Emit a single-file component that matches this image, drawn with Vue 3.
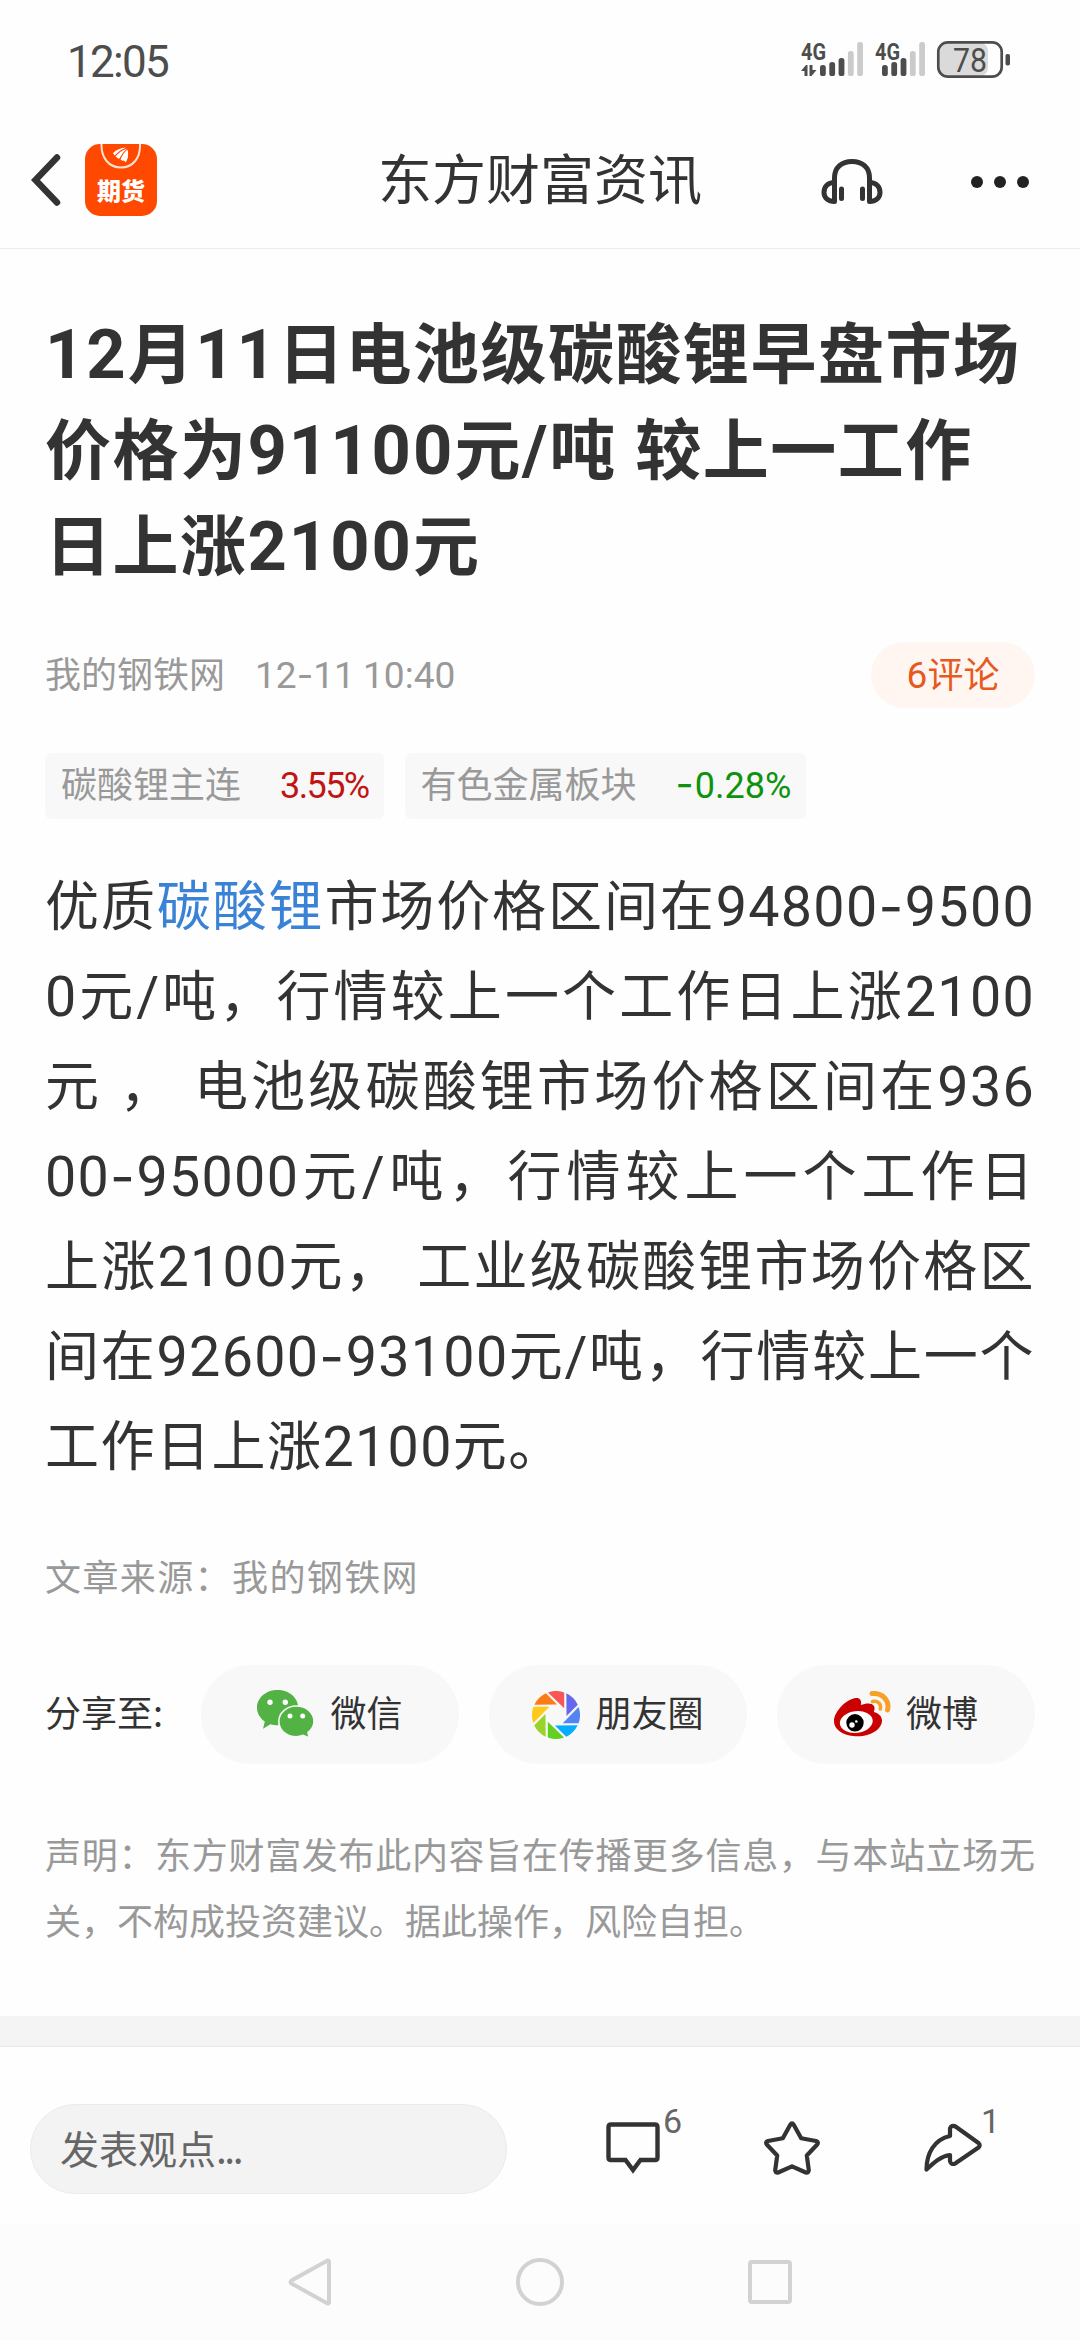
<script setup>
const titleLines = [
  "12月11日电池级碳酸锂早盘市场",
  "价格为91100元/吨 较上一工作",
  "日上涨2100元",
];

const tags = [
  { name: "碳酸锂主连", change: "3.55%", trend: "up" },
  { name: "有色金属板块", change: "-0.28%", trend: "down" },
];

const bodyLines = [
  "优质[碳酸锂]市场价格区间在94800-9500",
  "0元/吨，行情较上一个工作日上涨2100",
  "元 ， 电池级碳酸锂市场价格区间在936",
  "00-95000元/吨，行情较上一个工作日",
  "上涨2100元， 工业级碳酸锂市场价格区",
  "间在92600-93100元/吨，行情较上一个",
  "工作日上涨2100元。",
];

const bladeColors = [
  "#f95555",
  "#6568ee",
  "#5384f4",
  "#05adff",
  "#62d021",
  "#9ad329",
  "#ffc81b",
  "#fd7b17",
];

const signals = [
  { x: 0, bars: 22, data: true },
  { x: 74, bars: 10, data: false },
];

const barHeights = [11, 14, 18, 25, 34];

// split a line into numbers, hyphens, [links] and plain text
function runs(text) {
  return text
    .split(/(\[[^\]]+\]|[\d.:%/]+|-)/)
    .filter((part) => part !== "")
    .map((part) => {
      if (part.startsWith("[")) return { text: part.slice(1, -1), type: "link" };
      if (part === "-") return { text: part, type: "dash" };
      if (/^[\d.:%/]+$/.test(part)) return { text: part, type: "num" };
      return { text: part, type: "word" };
    });
}
</script>

<template>
  <div class="page">
    <div class="status-bar">
      <span class="clock">12:05</span>
      <svg class="status-icons" width="212" height="40" viewBox="0 0 212 40">
        <g v-for="s in signals" :key="s.x" :transform="`translate(${s.x} 0)`">
          <text x="0" y="19.5" class="net" textLength="25" lengthAdjust="spacingAndGlyphs">4G</text>
          <rect
            v-for="(h, i) in barHeights"
            :key="h"
            :x="s.bars - 3 + i * 9.3"
            :y="36 - h"
            width="5.8"
            :height="h"
            rx="2.6"
            :fill="i < 3 ? '#4d4d4d' : '#cbcbcb'"
          />
          <path
            v-if="s.data"
            d="M0 31 L5 25 H6.5 V36 H3.5 V31 Z M8.5 25 H11.5 V30 H15.5 L10.5 36 H8.5 Z"
            fill="#4d4d4d"
          />
        </g>
        <rect x="138.5" y="3" width="48.5" height="33" rx="8" fill="#dadada" />
        <rect x="137.3" y="2.3" width="63.4" height="34.4" rx="9.5" fill="none" stroke="#4d4d4d" stroke-width="2.7" />
        <rect x="204.5" y="14" width="4.5" height="11.5" rx="1.8" fill="#4d4d4d" />
        <text x="152" y="31.5" class="level" textLength="34" lengthAdjust="spacingAndGlyphs">78</text>
      </svg>
    </div>

    <header class="nav-bar">
      <div class="nav-left">
        <svg width="32" height="54" viewBox="0 0 32 54">
          <path d="M27 4.5 L5.5 27 L27 49.5" fill="none" stroke="#333" stroke-width="6.5" stroke-linecap="round" />
        </svg>
        <div class="app-icon">
          <svg width="72" height="30" viewBox="0 0 72 30">
            <path d="M16.5 0 C16 14 24 23.5 36 23.5 S55.5 14 55 0" fill="none" stroke="#ffe3d6" stroke-width="2" />
            <path d="M28 9 Q33 4 41 3.5 Q34 6.5 29.5 11.5 Z" fill="#fff" />
            <path d="M30.5 12.5 Q35 7 42 4.5 Q37 9 34 15 Z" fill="#fff" />
            <path d="M35.5 15.5 Q38 9 42.5 5.5 Q44.5 13 40.5 18.5 Q39 15.5 38 17 Z" fill="#fff" />
          </svg>
          <span>期货</span>
        </div>
      </div>
      <h2 class="nav-title">东方财富资讯</h2>
      <div class="nav-right">
        <svg width="62" height="48" viewBox="0 0 62 48" fill="none" stroke="#333">
          <path d="M13.5 43.5 V20 C13.5 9 21 3.5 31 3.5 S48.5 9 48.5 20 V43.5" stroke-width="5" />
          <path d="M13.5 24.5 C6.5 24.5 3 29 3 34.5 S7.5 43.5 13.5 43.5" stroke-width="5" stroke-linecap="round" />
          <path d="M48.5 24.5 C55.5 24.5 59 29 59 34.5 S54.5 43.5 48.5 43.5" stroke-width="5" stroke-linecap="round" />
          <path d="M20.5 31 V40.5 M41.5 31 V40.5" stroke-width="5" stroke-linecap="round" />
        </svg>
        <svg width="60" height="14" viewBox="0 0 60 14" fill="#222">
          <circle cx="7" cy="7" r="6" />
          <circle cx="30" cy="7" r="6" />
          <circle cx="53" cy="7" r="6" />
        </svg>
      </div>
    </header>

    <main class="article">
      <h1 class="title">
        <div v-for="line in titleLines" :key="line">
          <span v-for="(run, i) in runs(line)" :key="i" :class="run.type">{{ run.text }}</span>
        </div>
      </h1>

      <div class="meta">
        <span class="author">我的钢铁网</span>
        <span class="date">
          <span v-for="(run, i) in runs('12-11 10:40')" :key="i" :class="run.type">{{ run.text }}</span>
        </span>
        <span class="comments"><span class="num">6</span>评论</span>
      </div>

      <div class="tags">
        <div v-for="tag in tags" :key="tag.name" class="tag">
          <span>{{ tag.name }}</span>
          <span class="change" :class="tag.trend">
            <span v-for="(run, i) in runs(tag.change)" :key="i" :class="run.type">{{ run.text }}</span>
          </span>
        </div>
      </div>

      <div class="content">
        <p v-for="line in bodyLines" :key="line">
          <span v-for="(run, i) in runs(line)" :key="i" :class="run.type">{{ run.text }}</span>
        </p>
      </div>

      <p class="source">文章来源：我的钢铁网</p>

      <div class="share">
        <span class="share-label">分享至:</span>
        <button class="share-btn">
          <svg width="58" height="49" viewBox="0 0 58 49">
            <path
              d="M20.6 0 C32 0 41.2 7.8 41.2 17.5 S32 35.2 20.6 35.2 C18 35.2 16 35 13.5 34.2 L6 38.7 L7.8 31.5 C3 28 0 23.5 0 17.5 C0 7.8 9.2 0 20.6 0 Z"
              fill="#52b244"
            />
            <path
              d="M39.3 16 C49 16 57 22.5 57 31.5 C57 36 54.8 39.5 51 42.5 L52.3 48 L46.2 45.3 C44 46.2 41.8 46.8 39.3 46.8 C29.5 46.8 21.8 40 21.8 31.5 S29.5 16 39.3 16 Z"
              fill="#52b244"
              stroke="#f8f8f8"
              stroke-width="1.6"
            />
            <g fill="#fff">
              <circle cx="13" cy="12.3" r="2.7" />
              <circle cx="28.3" cy="12.3" r="2.7" />
              <circle cx="33" cy="26" r="2.5" />
              <circle cx="45.7" cy="26" r="2.5" />
            </g>
          </svg>
          <span>微信</span>
        </button>
        <button class="share-btn">
          <svg width="48" height="48" viewBox="-24 -24 48 48">
            <path
              v-for="(color, i) in bladeColors"
              :key="color"
              d="M-8 -22.6 A24 24 0 0 1 8.2 -22.6 V-6.7 Z"
              :fill="color"
              :transform="`rotate(${i * 45})`"
            />
          </svg>
          <span>朋友圈</span>
        </button>
        <button class="share-btn">
          <svg width="57" height="47" viewBox="0 0 57 47">
            <path
              d="M0 30 C0 21 12 8 22 7 C26 6.8 28 9.5 26.8 14 C32 12 38 11.5 40 15 C41 17 40.5 19 39.8 21 C44 22 48 25 48 29.5 C48 38 37 45.3 24 45.3 C11 45.3 0 39.5 0 30 Z"
              fill="#c90101"
            />
            <ellipse cx="22.3" cy="31" rx="16.5" ry="10.8" fill="#fff" transform="rotate(-7 22.3 31)" />
            <circle cx="21" cy="31.8" r="8.7" fill="#000" />
            <circle cx="18" cy="34" r="2.7" fill="#fff" />
            <circle cx="22.3" cy="30.5" r="1.3" fill="#fff" />
            <path d="M38 2.6 C48 1.5 56 9 53.5 19" fill="none" stroke="#f7a128" stroke-width="5" stroke-linecap="round" />
            <path d="M38.5 10.5 C44 9.5 47.5 13 46.3 18" fill="none" stroke="#f7a128" stroke-width="3.6" stroke-linecap="round" />
          </svg>
          <span>微博</span>
        </button>
      </div>

      <div class="notice">
        <p>声明：东方财富发布此内容旨在传播更多信息，与本站立场无</p>
        <p>关，不构成投资建议。据此操作，风险自担。</p>
      </div>
    </main>

    <div class="divider"></div>

    <footer class="toolbar">
      <div class="input">发表观点<span class="dots">...</span></div>
      <div class="actions">
        <div class="action">
          <svg width="56" height="56" viewBox="0 0 56 56">
            <path
              d="M6 3.5 H50 Q52.5 3.5 52.5 6 V36.5 Q52.5 39 50 39 H35.5 L28 49 L20.5 39 H6 Q3.5 39 3.5 36.5 V6 Q3.5 3.5 6 3.5 Z"
              fill="none"
              stroke="#333"
              stroke-width="4.4"
            />
          </svg>
          <span class="count">6</span>
        </div>
        <div class="action">
          <svg width="56" height="56" viewBox="0 0 56 56">
            <path
              d="M26.3 3.8 Q28 1 29.7 3.8 L37.2 17.3 L52 20 Q55 21 53.2 23.5 L42.8 34.5 L44.8 49.3 Q44.7 52.3 41.8 51.5 L28 45.3 L14.2 51.5 Q11.3 52.3 11.2 49.3 L13.2 34.5 L2.8 23.5 Q1 21 4 20 L18.8 17.3 Z"
              fill="none"
              stroke="#333"
              stroke-width="4.2"
              stroke-linejoin="round"
            />
          </svg>
        </div>
        <div class="action">
          <svg width="60" height="56" viewBox="0 0 60 56">
            <path
              d="M27 7.5 Q28.5 3.5 32.5 5.5 L55.5 22 Q57.8 24 55.5 26.5 L32.5 42.3 Q28 44.5 27 40 V34 C18 35 11 41.5 3.5 48.5 C3.5 32 11.5 18.5 27 15 Z"
              fill="none"
              stroke="#333"
              stroke-width="4.2"
              stroke-linejoin="round"
            />
          </svg>
          <span class="count">1</span>
        </div>
      </div>
    </footer>

    <nav class="system-nav">
      <svg width="48" height="52" viewBox="0 0 48 52">
        <path d="M41.5 4.5 Q43 4 43 6 V46 Q43 48 41.5 47.5 L5.5 27.5 Q3.5 26 5.5 24.5 Z" fill="none" stroke="#d2d2d2" stroke-width="4" />
      </svg>
      <svg width="48" height="52" viewBox="0 0 48 52">
        <circle cx="24" cy="26" r="22" fill="none" stroke="#d2d2d2" stroke-width="4" />
      </svg>
      <svg width="48" height="52" viewBox="0 0 48 52">
        <rect x="4" y="6" width="40" height="40" rx="2" fill="none" stroke="#d2d2d2" stroke-width="4" />
      </svg>
    </nav>
  </div>
</template>

<style>
body {
  margin: 0;
  background: #fff;
}
</style>

<style scoped>
.page {
  width: 1080px;
  height: 2340px;
  display: flex;
  flex-direction: column;
  overflow: hidden;
  background: #fefefe;
  color: #333;
  font-family: "Noto Sans CJK SC", sans-serif;
  font-size: 36px;
}
p,
h1,
h2 {
  margin: 0;
}
svg {
  flex: none;
  display: block;
}
.num {
  font-family: Roboto, sans-serif;
  font-size: 1.03em;
  line-height: 1;
}
.dash {
  font-family: Inter, sans-serif;
  line-height: 1;
}
.word {
  white-space: pre;
}
.status-bar {
  height: 112px;
  box-sizing: border-box;
  padding: 40px 67px 0 67px;
  display: flex;
  justify-content: space-between;
  align-items: flex-start;
}
.clock {
  font-family: Roboto, sans-serif;
  font-size: 44px;
  line-height: 44px;
  letter-spacing: -1.7px;
  color: #4d4d4d;
}
.net {
  font-family: Roboto, sans-serif;
  font-size: 23px;
  font-weight: 700;
  fill: #4d4d4d;
}
.level {
  font-family: Roboto, sans-serif;
  font-size: 33px;
  fill: #4d4d4d;
}
.nav-bar {
  height: 136px;
  border-bottom: 1px solid #ebebeb;
  padding: 0 50px 0 30px;
  display: grid;
  grid-template-columns: 348px 1fr 230px;
  align-items: center;
}
.nav-left {
  display: flex;
  align-items: center;
  gap: 23px;
}
.app-icon {
  width: 72px;
  height: 72px;
  border-radius: 15px;
  background: #ff4800;
  color: #fff;
  text-align: center;
  overflow: hidden;
}
.app-icon span {
  display: block;
  font-size: 24px;
  line-height: 32px;
  font-weight: 900;
}
.nav-title {
  padding-bottom: 6px;
  font-size: 54px;
  line-height: 80px;
  font-weight: 400;
  white-space: nowrap;
}
.nav-right {
  display: flex;
  align-items: center;
  justify-content: space-between;
  padding: 3px 0 0 21px;
}
.article {
  height: 1767px;
  box-sizing: border-box;
  padding: 52px 45px 0;
}
.title {
  font-size: 66px;
  line-height: 96px;
  font-weight: 700;
  letter-spacing: 1.5px;
  word-spacing: 2px;
  white-space: nowrap;
}
.title .num {
  font-size: 1.04em;
  letter-spacing: 2px;
}
.meta {
  height: 66px;
  margin-top: 53px;
  display: flex;
  align-items: center;
  color: #999;
}
.author,
.date {
  padding-bottom: 7px;
}
.date {
  margin-left: 30px;
}
.comments {
  margin-left: auto;
  width: 164px;
  height: 66px;
  border-radius: 33px;
  background: #fff6f2;
  color: #e65a1e;
  line-height: 60px;
  text-align: center;
}
.tags {
  margin-top: 45px;
  display: flex;
  gap: 21px;
}
.tag {
  height: 66px;
  box-sizing: border-box;
  padding: 0 15px 7px 16px;
  border-radius: 6px;
  background: #f8f8f8;
  color: #999;
  display: flex;
  align-items: center;
  line-height: 59px;
}
.change {
  margin-left: 39px;
}
.change .num {
  font-size: 1em;
  letter-spacing: -1.6px;
}
.change .dash {
  font-size: 1.1em;
  letter-spacing: 1px;
}
.change.down .num {
  letter-spacing: 0;
}
.up {
  color: #c11414;
}
.down {
  color: #0f930f;
}
.content {
  margin-top: 39px;
  font-size: 54px;
  line-height: 90px;
  letter-spacing: 1.5px;
  word-spacing: 2px;
}
.content p {
  text-align: justify;
  text-align-last: justify;
  white-space: nowrap;
}
.content p:last-child {
  text-align-last: left;
}
.content .num {
  letter-spacing: 1.3px;
}
.link {
  color: #3a82d6;
}
.source {
  margin-top: 54px;
  line-height: 66px;
  letter-spacing: 1.4px;
  color: #999;
}
.share {
  margin-top: 57px;
  height: 99px;
  display: flex;
  align-items: center;
  gap: 30px;
}
.share-label {
  width: 126px;
  padding-bottom: 8px;
  line-height: 60px;
  white-space: nowrap;
}
.share-btn {
  flex: 1;
  height: 99px;
  padding: 0;
  border: 0;
  border-radius: 50px;
  background: #f8f8f8;
  display: flex;
  align-items: center;
  justify-content: center;
  gap: 15px;
  color: #333;
  font: inherit;
  line-height: 60px;
}
.share-btn span {
  padding-bottom: 8px;
}
.notice {
  margin-top: 56px;
  line-height: 66px;
  color: #999;
}
.notice p:first-child {
  text-align-last: justify;
}
.divider {
  height: 30px;
  background: #f4f4f4;
  border-bottom: 1px solid #e8e8e8;
}
.toolbar {
  height: 177px;
  box-sizing: border-box;
  padding: 27px 30px 0;
  display: flex;
  align-items: center;
  gap: 98px;
}
.input {
  width: 477px;
  height: 90px;
  box-sizing: border-box;
  padding-left: 29px;
  border: 1px solid #ebebeb;
  border-radius: 45px;
  background: #f3f3f3;
  color: #666;
  font-size: 39px;
  line-height: 84px;
}
.dots {
  letter-spacing: -2.5px;
}
.actions {
  display: flex;
  gap: 103px;
}
.action {
  position: relative;
  width: 56px;
}
.count {
  position: absolute;
  left: 58px;
  top: -20px;
  font-family: Roboto, sans-serif;
  font-size: 34px;
  line-height: 40px;
  color: #666;
}
.system-nav {
  flex: 1;
  background: #fcfcfc;
  display: flex;
  justify-content: center;
  align-items: center;
  gap: 182px;
}
</style>
